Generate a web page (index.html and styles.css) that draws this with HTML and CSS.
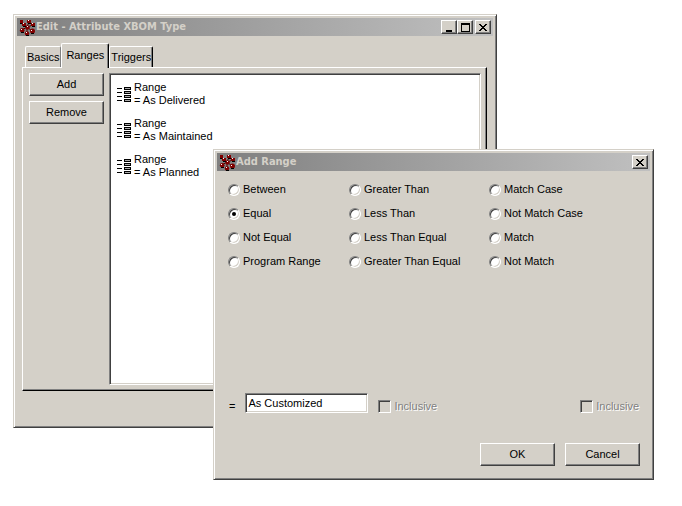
FILE: index.html
```html
<!DOCTYPE html>
<html lang="en">
<head>
    <meta charset="UTF-8">
    <meta name="viewport" content="width=device-width, initial-scale=1.0">
    <title>Edit - Attribute XBOM Type</title>
    <link rel="stylesheet" href="styles.css">
</head>
<body>
    <!-- shared icons -->
    <svg class="sprite" aria-hidden="true">
        <symbol id="molecule" viewBox="0 0 17 17">
            <path d="M4 4 8 8M10 3 8 8M14 6 8 8M3 11 8 8M13 12 8 8M8 14 8 8" stroke="#400000" stroke-width="1"/>
            <g fill="#800000">
                <path d="M1 1h3v3H1zM3 4h4v3H3zM8 1h4v3H8zM12 4h4v3h-4z"/>
                <circle cx="8.5" cy="8.5" r="2.2"/>
                <circle cx="3.2" cy="11.2" r="2.3"/>
                <circle cx="8" cy="14.5" r="2.2"/>
                <circle cx="13.5" cy="12" r="2.5"/>
            </g>
            <path d="M1 4h2v1H1zM4 7h3v1H4zM9 4h3v1H9zM13 7h3v1h-3zM2 13h3v1H2zM7 16h3v1H7zM12 14h3v1h-3z"/>
            <path d="M4 4h1v1H4zM9 1h1v1H9zM13 4h1v1h-1zM8 7h1v1H8zM2 10h1v1H2zM7 13h1v1H7zM12 11h1v1h-1z" fill="#fff"/>
        </symbol>
        <symbol id="range" viewBox="0 0 14 15">
            <path d="M0 1h5v1H0zM0 5h5v1H0zM0 9h5v1H0zM0 13h5v1H0zM7 0h7v15H7z"/>
            <path d="M8 1h5v1H8zM8 5h5v1H8zM8 9h5v1H8zM8 13h5v1H8z" fill="#aaa"/>
            <path d="M7 3h7v1H7zM7 7h7v1H7zM7 11h7v1H7z" fill="#fff"/>
        </symbol>
        <symbol id="close" viewBox="0 0 8 7">
            <path d="M0 0h2v1H0zM6 0h2v1H6zM1 1h2v1H1zM5 1h2v1H5zM2 2h4v1H2zM3 3h2v1H3zM2 4h4v1H2zM1 5h2v1H1zM5 5h2v1H5zM0 6h2v1H0zM6 6h2v1H6z"/>
        </symbol>
    </svg>

    <main class="desktop">
        <section class="window edit-window">
            <header class="title-bar">
                <svg class="app-icon"><use href="#molecule"/></svg>
                <h1>Edit - Attribute XBOM Type</h1>
                <button class="title-button" aria-label="Minimize">
                    <svg width="9" height="9" viewBox="0 0 9 9"><path d="M1 7h6v2H1z"/></svg>
                </button>
                <button class="title-button" aria-label="Maximize">
                    <svg width="9" height="9" viewBox="0 0 9 9"><path fill-rule="evenodd" d="M0 0h9v9H0zM1 2v6h7V2z"/></svg>
                </button>
                <button class="title-button close" aria-label="Close">
                    <svg width="8" height="7"><use href="#close"/></svg>
                </button>
            </header>
            <div class="edit-body">
                <div class="tabs" role="tablist">
                    <button class="tab" role="tab">Basics</button>
                    <button class="tab active" role="tab" aria-selected="true">Ranges</button>
                    <button class="tab" role="tab">Triggers</button>
                </div>
                <div class="panel" role="tabpanel">
                    <div class="side-buttons">
                        <button class="button">Add</button>
                        <button class="button">Remove</button>
                    </div>
                    <ul class="range-list">
                        <li><svg class="range-icon"><use href="#range"/></svg><span>Range<br>= As Delivered</span></li>
                        <li><svg class="range-icon"><use href="#range"/></svg><span>Range<br>= As Maintained</span></li>
                        <li><svg class="range-icon"><use href="#range"/></svg><span>Range<br>= As Planned</span></li>
                    </ul>
                </div>
            </div>
        </section>

        <section class="window add-window" role="dialog" aria-labelledby="add-title">
            <header class="title-bar">
                <svg class="app-icon"><use href="#molecule"/></svg>
                <h2 id="add-title">Add Range</h2>
                <button class="title-button close" aria-label="Close">
                    <svg width="8" height="7"><use href="#close"/></svg>
                </button>
            </header>
            <form class="add-form">
                <div class="operators">
                    <label><input type="radio" name="operator">Between</label>
                    <label><input type="radio" name="operator">Greater Than</label>
                    <label><input type="radio" name="operator">Match Case</label>
                    <label><input type="radio" name="operator" checked>Equal</label>
                    <label><input type="radio" name="operator">Less Than</label>
                    <label><input type="radio" name="operator">Not Match Case</label>
                    <label><input type="radio" name="operator">Not Equal</label>
                    <label><input type="radio" name="operator">Less Than Equal</label>
                    <label><input type="radio" name="operator">Match</label>
                    <label><input type="radio" name="operator">Program Range</label>
                    <label><input type="radio" name="operator">Greater Than Equal</label>
                    <label><input type="radio" name="operator">Not Match</label>
                </div>
                <div class="value-row">
                    <label for="value">=</label>
                    <input class="value" id="value" type="text" value="As Customized">
                    <label class="inclusive"><input type="checkbox" disabled>Inclusive</label>
                    <label class="inclusive last"><input type="checkbox" disabled>Inclusive</label>
                </div>
                <div class="actions">
                    <button class="button" type="button">OK</button>
                    <button class="button" type="button">Cancel</button>
                </div>
            </form>
        </section>
    </main>
</body>
</html>
```
FILE: styles.css
```css
* {
    box-sizing: border-box;
}

body {
    margin: 0;
    background: #fff;
    color: #000;
    font: 11px/13px "Liberation Sans", Arial, sans-serif;
}

button,
input {
    margin: 0;
    padding: 0;
    font: inherit;
    color: inherit;
}

.sprite {
    position: absolute;
    width: 0;
    height: 0;
}

.desktop {
    position: relative;
    height: 100vh;
    overflow: hidden;
}

/* windows */
.window {
    position: absolute;
    display: flex;
    flex-direction: column;
    padding: 3px;
    background: #d4d0c8;
    border: 1px solid;
    border-color: #d4d0c8 #404040 #404040 #d4d0c8;
    box-shadow: inset 1px 1px #fff, inset -1px -1px #808080;
}

.edit-window {
    top: 14px;
    right: 185px;
    bottom: 78px;
    left: 13px;
}

.add-window {
    top: 149px;
    right: 28px;
    bottom: 26px;
    left: 213px;
}

.title-bar {
    display: flex;
    align-items: center;
    height: 18px;
    padding: 0 2px;
    background: linear-gradient(to right, #808080, #c0c0c0);
}

.title-bar h1,
.title-bar h2 {
    flex: 1;
    margin: 0;
    color: #d4d0c8;
    font: bold 11px/18px "DejaVu Sans Condensed", "DejaVu Sans", sans-serif;
    white-space: nowrap;
}

.app-icon {
    width: 17px;
    height: 17px;
}

.title-button {
    display: flex;
    align-items: center;
    justify-content: center;
    width: 16px;
    height: 14px;
    background: #d4d0c8;
    border: 1px solid;
    border-color: #fff #404040 #404040 #fff;
    box-shadow: inset -1px -1px #808080;
}

.title-button.close {
    margin-left: 2px;
}

.button {
    width: 75px;
    height: 23px;
    background: #d4d0c8;
    border: 1px solid;
    border-color: #fff #404040 #404040 #fff;
    box-shadow: inset -1px -1px #808080;
}

/* edit window */
.edit-body {
    flex: 1;
    display: flex;
    flex-direction: column;
    padding: 7px 6px 33px 5px;
}

.tabs {
    display: flex;
    align-items: flex-end;
    padding-left: 3px;
}

.tab {
    height: 21px;
    padding: 0 1px;
    background: #d4d0c8;
    border: 1px solid;
    border-color: #fff #000 transparent #fff;
    border-bottom: 0;
    border-radius: 2px 2px 0 0;
    box-shadow: inset -1px 0 #808080;
}

.tab:first-child {
    border-right-color: #808080;
    box-shadow: none;
}

.tab.active {
    z-index: 1;
    height: 25px;
    margin-bottom: -1px;
    padding: 0 4px 1px;
}

.panel {
    flex: 1;
    display: flex;
    gap: 5px;
    padding: 5px;
    border: 1px solid;
    border-color: #fff #000 #000 #fff;
    box-shadow: inset -1px -1px #808080;
}

.side-buttons {
    display: flex;
    flex-direction: column;
    gap: 5px;
    padding-left: 1px;
}

.range-list {
    flex: 1;
    display: flex;
    flex-direction: column;
    gap: 10px;
    margin: 0;
    padding: 7px;
    list-style: none;
    background: #fff;
    border: 1px solid;
    border-color: #808080 #fff #fff #808080;
    box-shadow: inset 1px 1px #404040, inset -1px -1px #d4d0c8;
}

.range-list li {
    display: flex;
    align-items: center;
    gap: 3px;
}

.range-icon {
    width: 14px;
    height: 15px;
}

/* add window */
.add-form {
    flex: 1;
    display: flex;
    flex-direction: column;
    padding: 12px 10px 10px;
}

.operators {
    display: grid;
    grid-template-columns: 121px 140px 1fr;
    row-gap: 11px;
    padding-left: 1px;
}

.operators label,
.inclusive {
    display: flex;
    align-items: center;
    gap: 3px;
}

input[type="radio"] {
    display: grid;
    place-items: center;
    width: 12px;
    height: 12px;
    appearance: none;
    background: #fff;
    border: 1px solid;
    border-color: #808080 #fff #fff #808080;
    border-radius: 50%;
    box-shadow: inset 1px 1px #404040, inset -1px -1px #d4d0c8;
}

input[type="radio"]:checked::before {
    width: 4px;
    height: 4px;
    content: "";
    background: #000;
    border-radius: 50%;
}

.value-row {
    display: flex;
    align-items: flex-end;
    margin-top: auto;
    padding: 0 1px 0 2px;
}

.value {
    width: 123px;
    height: 20px;
    margin: 0 10px;
    padding: 0 2px;
    background: #fff;
    border: 1px solid;
    border-color: #808080 #fff #fff #808080;
    box-shadow: inset 1px 1px #404040, inset -1px -1px #d4d0c8;
    outline: 0;
}

.inclusive {
    color: #808080;
    text-shadow: 1px 1px #fff;
}

.inclusive.last {
    margin-left: auto;
}

input[type="checkbox"] {
    width: 13px;
    height: 13px;
    appearance: none;
    background: #d4d0c8;
    border: 1px solid;
    border-color: #808080 #fff #fff #808080;
    box-shadow: inset 1px 1px #404040;
}

.actions {
    display: flex;
    justify-content: flex-end;
    gap: 10px;
    margin-top: 30px;
}
```
